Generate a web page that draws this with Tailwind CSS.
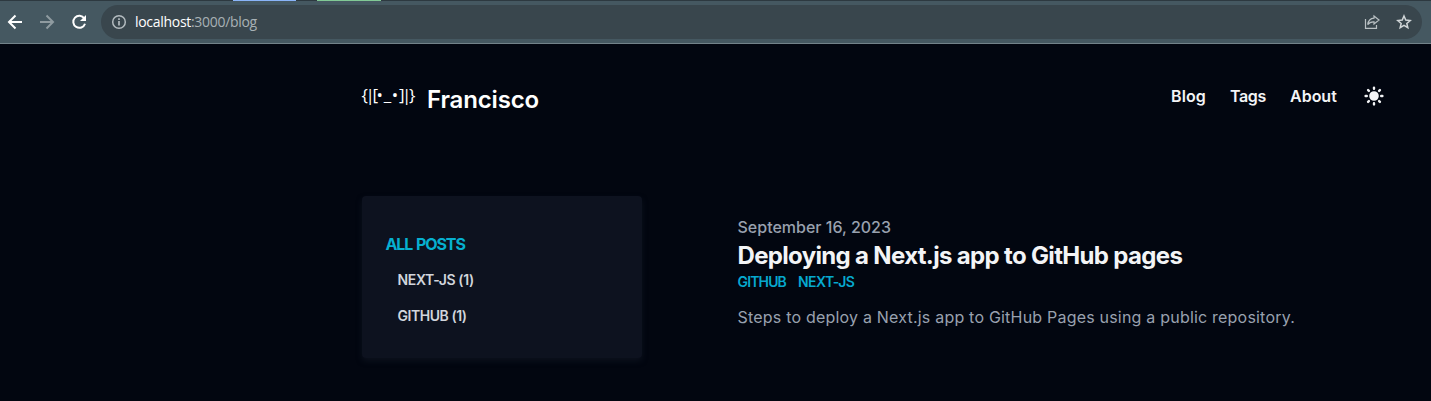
<!DOCTYPE html>
<html lang="en">
<head>
<meta charset="utf-8">
<title>Blog</title>
<script src="https://cdn.jsdelivr.net/npm/@tailwindcss/browser@4"></script>
</head>
<body class="w-[1431px] h-[401px] overflow-hidden bg-[#020610] font-['Inter',sans-serif] text-gray-100 whitespace-nowrap">
<div class="h-[44px] bg-[#455861] border-b border-[#73838a] flex flex-col">
  <div class="h-px bg-[#2d3940] flex pl-[233px] gap-[21px]">
    <div class="w-[63px] bg-[#8ab4f8]"></div>
    <div class="w-[64px] bg-[#81c995]"></div>
  </div>
  <div class="flex items-center pt-1 pl-[5px]">
    <svg class="w-5 h-5" viewBox="0 0 20 20" fill="none" stroke="#fff" stroke-width="2"><path d="M17 10H4.500M10.500 3.500L4 10l6.500 6.500"/></svg>
    <svg class="w-5 h-5 ml-3" viewBox="0 0 20 20" fill="none" stroke="#8f9ba0" stroke-width="2"><path d="M3 10h12.500M9.500 3.500L16 10l-6.500 6.500"/></svg>
    <svg class="w-5 h-5 ml-3" viewBox="0 0 20 20" fill="none" stroke="#fff" stroke-width="2"><path d="M15.300 6.500A6 6 0 1 0 16 11.700"/><path d="M17 3v6h-6z" fill="#fff" stroke="none"/></svg>
    <div class="ml-3 w-[1321px] h-[34px] rounded-full bg-[#39464d] flex items-center pl-2.5 pr-2.5">
      <svg class="w-4 h-4" viewBox="0 0 16 16" fill="none" stroke="#b3bbbf" stroke-width="1.500"><circle cx="8" cy="8" r="6.300"/><path d="M8 7v4.500M8 4.300v1.600" stroke-width="1.700"/></svg>
      <span class="ml-2 font-['Open_Sans','Noto_Sans',sans-serif] text-[14px] leading-5 tracking-[-0.3px] text-[#a8b1b5]"><span class="text-white">localhost</span>:3000/blog</span>
      <svg class="w-4 h-4 ml-auto" viewBox="0 0 16 16" fill="none" stroke="#b9c0c3" stroke-width="1.200"><path d="M1.500 5v9.400h11V11"/><path d="M10 2l5 4-5 4V7.800C7 7.600 5.200 8.500 3.700 10.600 4.200 7 6.200 4.500 10 4.200z"/></svg>
      <svg class="w-4 h-4 ml-4" viewBox="0 0 16 16" fill="none" stroke="#d0d5d7" stroke-width="1.500"><path d="M8 2l1.750 4.100 4.450.4-3.370 2.900 1 4.350L8 11.450l-3.830 2.300 1-4.350L1.800 6.500l4.450-.4z"/></svg>
    </div>
  </div>
</div>
<div class="pl-[361.5px] pr-[45px] flex justify-between h-[152px] pt-[36px]">
  <div class="flex items-start text-white">
    <span class="w-[65.5px] pt-px font-['Open_Sans',sans-serif] text-[17px] leading-7"><span class="tracking-[-2.400px]">{|[</span><span class="ml-[1px] tracking-[0.7px]">•_•</span><span class="tracking-[-2.400px]">]|}</span></span>
    <span class="pt-1 text-[24px] leading-8 font-semibold tracking-[-0.15px]">Francisco</span>
  </div>
  <div class="flex items-center h-8 text-base font-semibold">
    <span class="w-[59px] tracking-[0.1px]">Blog</span>
    <span class="w-[60px] tracking-[-0.4px]">Tags</span>
    <span class="w-[72px]">About</span>
    <svg class="w-6 h-6" viewBox="0 0 20 20" fill="#f3f4f6"><path fill-rule="evenodd" clip-rule="evenodd" d="M10 2a1 1 0 011 1v1a1 1 0 11-2 0V3a1 1 0 011-1zm4 8a4 4 0 11-8 0 4 4 0 018 0zm-.464 4.950l.707.707a1 1 0 001.414-1.414l-.707-.707a1 1 0 00-1.414 1.414zm2.120-10.607a1 1 0 010 1.414l-.706.707a1 1 0 11-1.414-1.414l.707-.707a1 1 0 011.414 0zM17 11a1 1 0 100-2h-1a1 1 0 100 2h1zm-7 4a1 1 0 011 1v1a1 1 0 11-2 0v-1a1 1 0 011-1zM5.050 6.464A1 1 0 106.465 5.050l-.708-.707a1 1 0 00-1.414 1.414l.707.707zm1.414 8.486l-.707.707a1 1 0 01-1.414-1.414l.707-.707a1 1 0 011.414 1.414zM4 11a1 1 0 100-2H3a1 1 0 000 2h1z"/></svg>
  </div>
</div>
<div class="flex pl-[361.5px]">
  <div class="w-[280.5px] h-[162px] rounded bg-[#0d121f] shadow-[0_3px_6px_rgba(31,41,55,0.35)] pt-9 pl-6 flex flex-col">
    <span class="text-base leading-6 font-bold text-[#06b0d0] tracking-[-1.100px] [word-spacing:1px]">ALL POSTS</span>
    <span class="pl-3 mt-[14px] text-sm font-semibold leading-5 text-gray-300 tracking-[-0.35px]">NEXT-JS (1)</span>
    <span class="pl-3 mt-4 text-sm font-semibold leading-5 text-gray-300 tracking-[-0.45px]">GITHUB (1)</span>
  </div>
  <div class="ml-[95.5px] pt-[19px] flex flex-col items-start">
    <span class="text-base leading-6 font-medium text-gray-400">September 16, 2023</span>
    <span class="pt-px text-2xl leading-8 font-bold tracking-[-0.67px]">Deploying a Next.js app to GitHub pages</span>
    <div class="flex text-sm leading-5 font-semibold text-[#06a9cf]"><span class="w-[60.5px] tracking-[-0.85px]">GITHUB</span><span class="tracking-[-0.55px]">NEXT-JS</span></div>
    <span class="mt-[13px] text-base leading-6 text-gray-400 tracking-[0.205px]">Steps to deploy a Next.js app to GitHub Pages using a public repository.</span>
  </div>
</div>
</body>
</html>
